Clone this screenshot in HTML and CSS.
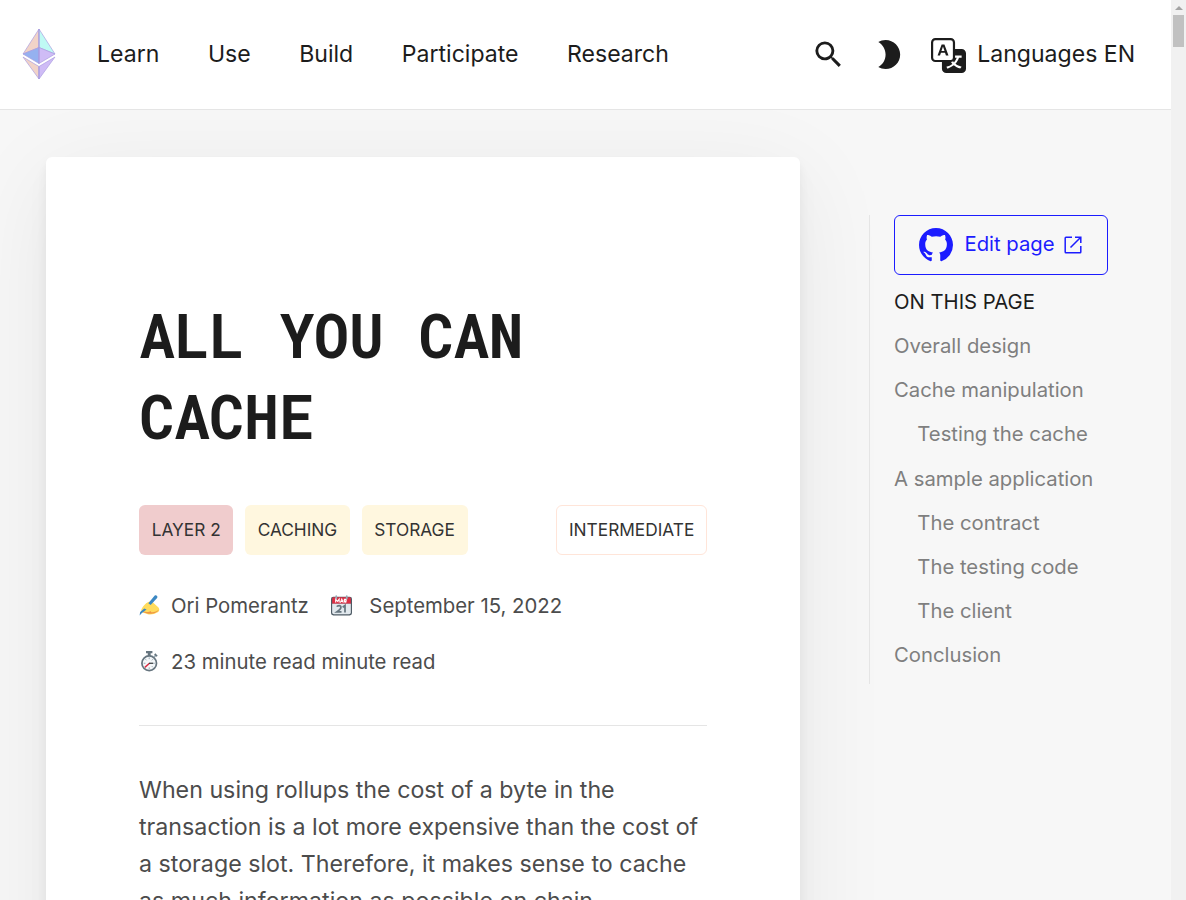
FILE: index.html
```html
<!DOCTYPE html>
<html lang="en">
<head>
<meta charset="utf-8">
<title>All you can cache</title>
<link rel="stylesheet" href="styles.css">
</head>
<body>
<div class="window">
<div class="page">
  <header class="navbar">
    <svg class="logo" viewBox="0 0 34 52" width="34" height="52" stroke="#a89be0" stroke-opacity=".75" stroke-width=".9" stroke-linejoin="round">
      <path fill="#f1d3c8" d="M17 1 1 26l16-6.500z"/>
      <path fill="#bffaf4" d="M17 1l16 25-16-6.500z"/>
      <path fill="#95b1f0" d="M1 26l16-6.500V35.500z"/>
      <path fill="#cfbcf6" d="M33 26l-16-6.500V35.500z"/>
      <path fill="#f1d3c8" d="M1 29l16 9.500V51z"/>
      <path fill="#cfbcf6" d="M33 29l-16 9.500V51z"/>
      <path stroke-width="1.400" d="M17 1v34.500M17 38.500V51"/>
    </svg>
    <nav class="links"><a>Learn</a><a>Use</a><a>Build</a><a>Participate</a><a>Research</a></nav>
    <div class="tools">
      <svg viewBox="0 0 24 24" width="35" height="35" fill="currentColor"><path d="M15.5 14h-.79l-.28-.27A6.47 6.47 0 0 0 16 9.500 6.500 6.500 0 1 0 9.500 16c1.610 0 3.090-.59 4.230-1.570l.27.28v.79l5 4.990L20.490 19l-4.990-5zm-6 0C7.010 14 5 11.990 5 9.500S7.010 5 9.500 5 14 7.010 14 9.500 11.990 14 9.500 14z"/></svg>
      <svg class="moon" viewBox="0 0 24 24" width="35" height="35" fill="currentColor"><path d="M10 2c-1.820 0-3.530.5-5 1.350C7.990 5.080 10 8.300 10 12s-2.010 6.920-5 8.650C6.470 21.500 8.180 22 10 22c5.520 0 10-4.480 10-10S15.520 2 10 2z"/></svg>
      <svg class="translate" viewBox="0 0 16 16" width="35" height="35" fill="currentColor"><path d="M0 2a2 2 0 0 1 2-2h7a2 2 0 0 1 2 2v3h3a2 2 0 0 1 2 2v7a2 2 0 0 1-2 2H7a2 2 0 0 1-2-2v-3H2a2 2 0 0 1-2-2V2zm2-1a1 1 0 0 0-1 1v7a1 1 0 0 0 1 1h7a1 1 0 0 0 1-1V2a1 1 0 0 0-1-1H2zm7.138 9.995c.193.301.402.583.63.846-.748.575-1.673 1.001-2.768 1.292.178.217.451.635.555.867 1.125-.359 2.080-.844 2.886-1.494.777.665 1.739 1.165 2.930 1.472.133-.254.414-.673.629-.89-1.125-.253-2.057-.694-2.820-1.284.681-.747 1.222-1.651 1.621-2.757H14V8h-3v1.047h.765c-.318.844-.74 1.546-1.272 2.130a6.066 6.066 0 0 1-.415-.492 1.988 1.988 0 0 1-.94.31z"/><path d="M4.545 6.714 4.110 8H3l1.862-5h1.284L8 8H6.833l-.435-1.286H4.545zm1.634-.736L5.500 3.956h-.049l-.679 2.022H6.180z"/></svg>
      <span class="lang">Languages EN</span>
    </div>
  </header>
  <div class="content">
    <article class="card">
      <h1 class="title">ALL YOU CAN CACHE</h1>
      <div class="tags">
        <span class="tag layer">LAYER 2</span><span class="tag topic">CACHING</span><span class="tag topic">STORAGE</span>
        <span class="tag level">INTERMEDIATE</span>
      </div>
      <div class="meta">
        <span class="item">
          <svg class="emoji" viewBox="0 0 36 36" width="21" height="21"><path fill="#ffdc5d" d="M4 25c3-6 7-11 12-13 3-1 6 0 8 1l9 8c3 3 2 8-2 9-4 3-11 4-16 3L4 29z"/><path fill="#ef9645" d="M7 28c5 2 11 1 14-1l-1 2c4 1 10 0 14-4-2 6-12 8-18 7L6 29z"/><path fill="#3b88c3" d="M9 23l4 2L5 31l-4 4 1-6z"/><path fill="#ffdc5d" d="M12 15c4-4 10-1 16 3l-5 8c-3 0-4-2-3-4l-5-2c-3 0-5-3-3-5z"/><path fill="#3b88c3" d="M27 1c2-2 6 1 4 4L20 17l-4-3z"/></svg>
          <span>Ori Pomerantz</span>
        </span>
        <span class="item date">
          <svg class="emoji" viewBox="0 0 36 36" width="21" height="21"><rect y="3" width="36" height="32" rx="4" fill="#4f5c66"/><path fill="#dd2e44" d="M2 6q0-2 3-2h26q3 0 3 2v9H2z"/><path fill="#e1e8ed" d="M2 15h32v15q0 3-3 3H5q-3 0-3-3z"/><g fill="none" stroke="#fff" stroke-width="1.800"><path d="M8 13V7l3 4 3-4v6M16 13l2.500-6 2.500 6M17 11h3M23 13V7.500h3v3h-3l3 2.500"/></g><path fill="none" stroke="#66757f" stroke-width="3" d="M10 20q1-2 4-2t3 3-7 8h8M20 21l4-3v12"/><path stroke="#99aab5" stroke-width="3" stroke-linecap="round" d="M9 2v4M27 2v4"/></svg>
          <span>September 15, 2022</span>
        </span>
        <span class="item">
          <svg class="emoji" viewBox="0 0 36 36" width="21" height="21"><path fill="#66757f" d="M12 0h11v4h-3v5h-5V4h-3z"/><path stroke="#99aab5" stroke-width="3" d="m26 10 3-3"/><path stroke="#66757f" stroke-width="3" d="m27 5 4 4"/><circle cx="17.500" cy="21" r="12.500" fill="#f5f8fa" stroke="#66757f" stroke-width="3"/><path stroke="#8899a6" stroke-width="1.400" d="M17.500 11v3M17.500 28v3M8 21h3M24 21h3M11 14l2 2M24 14l-2 2M24 28l-2-2"/><path stroke="#dd2e44" stroke-width="2.500" d="m10 28 8-7"/><path stroke="#292f33" stroke-width="2" d="M17 21h7"/></svg>
          <span>23 minute read minute read</span>
        </span>
      </div>
      <hr class="rule">
      <p class="body">When using rollups the cost of a byte in the transaction is a lot more expensive than the cost of a storage slot. Therefore, it makes sense to cache as much information as possible on chain.</p>
    </article>
    <aside class="toc">
      <a class="edit">
        <svg viewBox="0 0 16 16" width="34" height="34" fill="currentColor"><path d="M8 0C3.580 0 0 3.580 0 8c0 3.540 2.290 6.530 5.470 7.590.4.07.55-.17.55-.38 0-.19-.01-.82-.01-1.490-2.010.37-2.530-.49-2.690-.94-.09-.23-.48-.94-.82-1.130-.28-.15-.68-.52-.01-.53.63-.01 1.080.58 1.230.82.72 1.210 1.870.87 2.330.66.07-.52.28-.87.51-1.070-1.780-.2-3.640-.89-3.640-3.950 0-.87.31-1.590.82-2.150-.08-.2-.36-1.020.08-2.120 0 0 .67-.21 2.200.82.64-.18 1.320-.27 2-.27.68 0 1.360.09 2 .27 1.530-1.040 2.200-.82 2.200-.82.44 1.100.16 1.920.08 2.120.51.56.82 1.270.82 2.150 0 3.070-1.870 3.750-3.650 3.950.29.25.54.73.54 1.480 0 1.070-.01 1.930-.01 2.200 0 .21.15.46.55.38A8.013 8.013 0 0 0 16 8c0-4.420-3.580-8-8-8z"/></svg>
        <span>Edit page</span>
        <svg class="ext" viewBox="0 0 18 18" width="18" height="18" fill="none" stroke="currentColor" stroke-width="1.500"><path d="M8 1.200H2q-.8 0-.8.8v14q0 .8.800.8h14q.8 0 .8-.8v-6M11 1.200h5.800V7M16.500 1.500 6.500 11.500"/></svg>
      </a>
      <div class="toc-title">ON THIS PAGE</div>
      <a>Overall design</a>
      <a>Cache manipulation</a>
      <a class="sub">Testing the cache</a>
      <a>A sample application</a>
      <a class="sub">The contract</a>
      <a class="sub">The testing code</a>
      <a class="sub">The client</a>
      <a>Conclusion</a>
    </aside>
  </div>
</div>
<div class="scrollbar"><span class="arrow"></span><span class="thumb"></span></div>
</div>
</body>
</html>
```
FILE: styles.css
```css
* { box-sizing: border-box; }
body { margin: 0; font-family: Inter, sans-serif; color: #1c1c1c; background: #f7f7f7; overflow: hidden; }
svg { display: block; flex: none; }
.window { display: flex; height: 900px; overflow: hidden; }
.page { width: 1171px; height: 900px; overflow: hidden; display: flex; flex-direction: column; }

.navbar { flex: none; height: 110px; display: flex; align-items: center; padding: 0 36px 1px 22px; background: #fff; border-bottom: 1px solid #e5e5e5; font-size: 23.050px; z-index: 1; }
.links { display: flex; gap: 48.600px; margin-left: 41px; }
.tools { display: flex; align-items: center; margin-left: auto; }
.moon { margin-left: 25px; }
.translate { margin-left: 25px; margin-top: 2px; }
.lang { margin-left: 11.300px; }

.content { display: flex; align-items: flex-start; flex: 1; min-height: 0; padding: 47px 0 0 46px; }
.card { width: 754px; height: 1200px; flex: none; padding: 137px 93px 0; background: #fff; border-radius: 6px; box-shadow: 0 20px 96px rgba(0,0,0,.07), 0 15px 25px rgba(0,0,0,.03), 0 6px 10px rgba(0,0,0,.05); }
.title { margin: 0 0 0 .500px; height: 211px; width: 520px; font: 670 58.200px/76px "Roboto Mono", "Liberation Mono", monospace; transform: scaleY(1.065); transform-origin: top; }
.tags { display: flex; gap: 11.700px; }
.tag { height: 50px; line-height: 48px; padding: 0 11.640px; border: 1px solid transparent; border-radius: 6px; font-size: 17.300px; color: #333; white-space: nowrap; }
.layer { background: #f0cccd; }
.topic { background: #fff7df; }
.level { margin-left: auto; border-color: #ffe5d9; }
.meta { display: flex; flex-wrap: wrap; margin-top: 35px; row-gap: 24px; font-size: 20.330px; line-height: 32px; color: #4c4c4c; }
.item { display: flex; align-items: center; margin-right: 22.500px; }
.emoji { margin: -2px 11px 0 0; }
.date .emoji { margin-right: 17px; }
.rule { height: 1px; margin: 47px 0 46px; border: 0; background: #e5e5e5; }
.body { margin: 0; width: 568px; font-size: 23.220px; line-height: 37px; color: #4c4c4c; }

.toc { display: flex; flex-direction: column; width: 239px; height: 469px; margin: 58px 0 0 69px; padding-left: 24px; border-left: 1px solid #e5e5e5; font-size: 20.300px; line-height: 32px; color: #7f7f7f; }
.toc a { margin-bottom: 12.150px; white-space: nowrap; }
.toc .edit { display: flex; align-items: center; height: 60px; margin-bottom: 11px; padding: 0 0 1px 23.500px; border: 1px solid #1c1cff; border-radius: 6px; color: #1c1cff; }
.edit span { margin: -1px 9px 0 12px; }
.toc-title { margin-bottom: 12.150px; color: #1c1c1c; }
.toc .sub { padding-left: 23.300px; }

.scrollbar { width: 15px; background: #f1f1f1; display: flex; flex-direction: column; align-items: center; }
.arrow { margin-top: 6px; border: 4px solid transparent; border-top: 0; border-bottom-color: #a3a3a3; }
.thumb { width: 11px; height: 32px; margin-top: 5px; background: #c1c1c1; }
```
